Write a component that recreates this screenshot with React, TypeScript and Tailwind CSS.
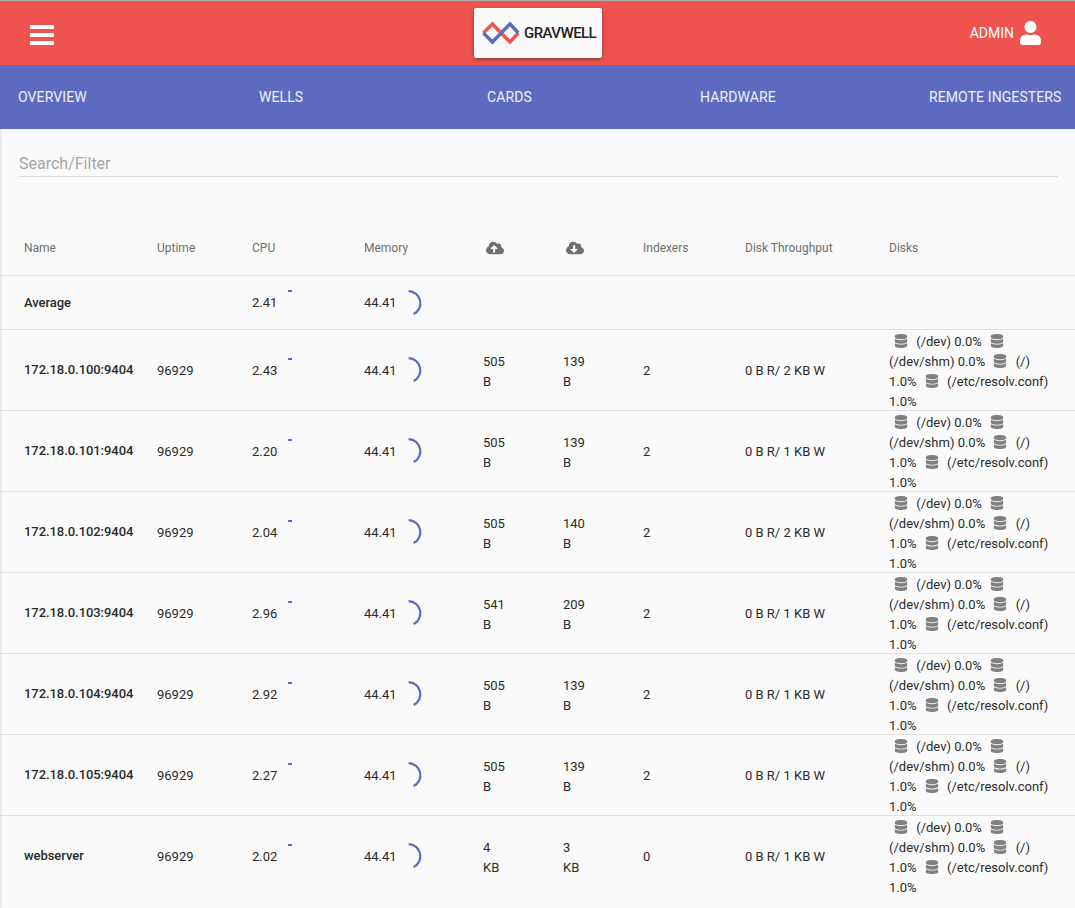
import React from 'react';
import { FaUser, FaCloudUploadAlt, FaCloudDownloadAlt, FaDatabase } from 'react-icons/fa';

const tabs = ['OVERVIEW', 'WELLS', 'CARDS', 'HARDWARE', 'REMOTE INGESTERS'];

const rows = [
  { name: '172.18.0.100:9404', cpu: '2.43', up: ['505', 'B'], down: ['139', 'B'], idx: '2', disk: '0 B R/ 2 KB W' },
  { name: '172.18.0.101:9404', cpu: '2.20', up: ['505', 'B'], down: ['139', 'B'], idx: '2', disk: '0 B R/ 1 KB W' },
  { name: '172.18.0.102:9404', cpu: '2.04', up: ['505', 'B'], down: ['140', 'B'], idx: '2', disk: '0 B R/ 2 KB W' },
  { name: '172.18.0.103:9404', cpu: '2.96', up: ['541', 'B'], down: ['209', 'B'], idx: '2', disk: '0 B R/ 1 KB W' },
  { name: '172.18.0.104:9404', cpu: '2.92', up: ['505', 'B'], down: ['139', 'B'], idx: '2', disk: '0 B R/ 1 KB W' },
  { name: '172.18.0.105:9404', cpu: '2.27', up: ['505', 'B'], down: ['139', 'B'], idx: '2', disk: '0 B R/ 1 KB W' },
  { name: 'webserver', cpu: '2.02', up: ['4', 'KB'], down: ['3', 'KB'], idx: '0', disk: '0 B R/ 1 KB W' },
];

const grid = 'grid grid-cols-[133px_95px_112px_119px_80px_80px_102px_144px_186px] items-center border-b border-[#e0e0e0] last:border-transparent pl-[24px]';

const Logo = () => (
  <svg width="40" height="24" viewBox="0 0 40 24" fill="none" strokeWidth="3.4">
    <path d="M2.4 12 L11.4 3 L29 21 L37.4 12" stroke="#ef5350" />
    <path d="M2.4 12 L11.4 21 L29 3 L37.4 12" stroke="#5c6bc0" />
  </svg>
);

const CpuGauge = () => (
  <svg width="6" height="4" viewBox="0 0 6 4" className="absolute left-[36px] top-[-3px]">
    <path d="M0 2 L4 2" stroke="#5c6bc0" strokeWidth="2" fill="none" />
  </svg>
);

const MemGauge = () => (
  <svg width="18" height="26" viewBox="0 0 18 26" className="ml-[9px]">
    <path d="M2.6 1.2 A 12 12 0 0 1 7.6 24" stroke="#5c6bc0" strokeWidth="2.2" fill="none" />
  </svg>
);

const Metric = ({ cpu }: { cpu: string }) => (
  <div className="relative pt-[1px]"><span>{cpu}</span><CpuGauge /></div>
);

const Memory = () => (
  <div className="flex items-center"><span className="pt-[1px]">44.41</span><MemGauge /></div>
);

const Db = () => <FaDatabase className="inline-block text-[14px] text-[#808080] mx-[5px] align-[-2px]" />;

const Disks = () => (
  <div className="h-[80px] leading-[20px] pt-[2px] whitespace-nowrap">
    <div><Db /> (/dev) 0.0% <Db /></div>
    <div>(/dev/shm) 0.0% <Db /> (/)</div>
    <div>1.0% <Db /> (/etc/resolv.conf)</div>
    <div>1.0%</div>
  </div>
);

export default function App() {
  return (
    <div className="min-h-[908px] bg-[#fafafa] font-['Roboto',sans-serif] text-[13px] text-[#2b2b2b] overflow-hidden border-t border-[#aaaaaa]">
      <header className="h-[64px] bg-[#ef5350] relative flex items-center justify-between pl-[30px] pr-[34px]">
        <div className="flex flex-col gap-[4px] w-[24px] mt-[4px]">
          <div className="h-[4px] bg-white" />
          <div className="h-[4px] bg-white" />
          <div className="h-[4px] bg-white" />
        </div>
        <div className="absolute left-[474px] top-[7px] w-[128px] h-[50px] bg-[#fafafa] rounded-[2px] shadow-[0_2px_4px_rgba(0,0,0,0.35)] flex items-center pl-[7px] gap-[3px]">
          <Logo />
          <span className="text-[15px] font-medium text-[#212121] tracking-[-0.55px]">GRAVWELL</span>
        </div>
        <div className="flex items-center gap-[6px] text-white text-[14px]">
          <span>ADMIN</span>
          <FaUser className="text-[20px] w-[21px] h-[24px]" />
        </div>
      </header>

      <nav className="h-[64px] bg-[#5c6bc0] grid grid-cols-[241px_228px_213px_229px_auto] items-center pl-[18px] text-[14px] tracking-[0.1px] text-white/90">
        {tabs.map((t) => (
          <span key={t}>{t}</span>
        ))}
      </nav>

      <main className="min-h-[779px] shadow-[inset_2px_0_2px_-1px_rgba(0,0,0,0.1)]">
        <div className="pl-[19px] pr-[17px] pt-[25px]">
          <div className="h-[23px] border-b border-[#dcdcdc] text-[16px] leading-[20px] text-[#a6a6a6]">Search/Filter</div>
        </div>

        <div className={`${grid} mt-[23px] h-[76px] pt-[21px] text-[#6f6f6f] text-[12px]`}>
          <span>Name</span>
          <span>Uptime</span>
          <span>CPU</span>
          <span>Memory</span>
          <FaCloudUploadAlt className="text-[18px] ml-[3px]" />
          <FaCloudDownloadAlt className="text-[18px] ml-[3px]" />
          <span>Indexers</span>
          <span>Disk Throughput</span>
          <span>Disks</span>
        </div>

        <div className={`${grid} h-[54px]`}>
          <span className="font-medium tracking-[-0.06px]">Average</span>
          <span />
          <Metric cpu="2.41" />
          <Memory />
        </div>

        {rows.map((r) => (
          <div key={r.name} className={`${grid} h-[81px]`}>
            <span className="font-medium tracking-[-0.06px]">{r.name}</span>
            <span className="pt-[1px]">96929</span>
            <Metric cpu={r.cpu} />
            <Memory />
            <div className="leading-[20px] pt-[4px]">{r.up[0]}<br />{r.up[1]}</div>
            <div className="leading-[20px] pt-[4px]">{r.down[0]}<br />{r.down[1]}</div>
            <span className="pt-[1px]">{r.idx}</span>
            <span className="pt-[1px]">{r.disk}</span>
            <Disks />
          </div>
        ))}
      </main>
    </div>
  );
}
